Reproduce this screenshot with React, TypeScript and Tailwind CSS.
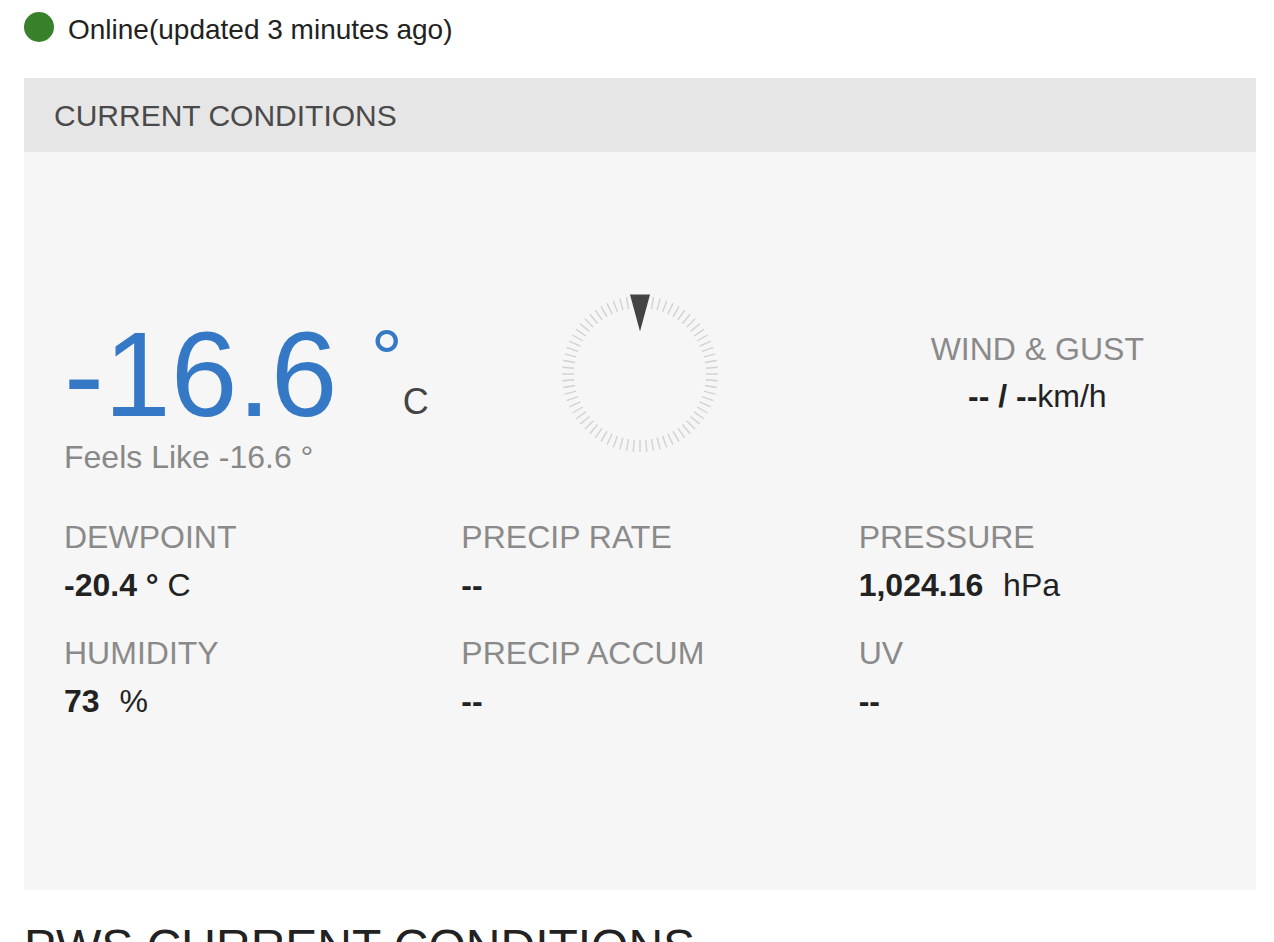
import React from "react";

const ticks = Array.from({ length: 72 }, (_, i) => i * 5);

function Compass() {
  return (
    <svg width="160" height="160" viewBox="0 0 160 160">
      {ticks.map((a) => {
        const r = (a * Math.PI) / 180;
        const x1 = 80 + Math.sin(r) * 66;
        const y1 = 80 - Math.cos(r) * 66;
        const x2 = 80 + Math.sin(r) * 78;
        const y2 = 80 - Math.cos(r) * 78;
        return (
          <line
            key={a}
            x1={x1}
            y1={y1}
            x2={x2}
            y2={y2}
            stroke="#d2d2d2"
            strokeWidth="1.4"
          />
        );
      })}
      <polygon points="70,0.5 90,0.5 80,37.5" fill="#444444" />
    </svg>
  );
}

function Stat({ label, value, unit, gap }: { label: string; value: string; unit?: string; gap?: boolean }) {
  return (
    <div className="pl-[20px]">
      <div className="text-[32px] leading-[38px] text-[#8a8a8a]">{label}</div>
      <div className="mt-[10px] text-[32px] leading-[38px] text-[#222]">
        <span className="font-bold">{value}</span>
        {unit ? <span className={gap ? "ml-[11px]" : ""}> {unit}</span> : null}
      </div>
    </div>
  );
}

export default function App() {
  return (
    <div
      className="h-[942px] overflow-hidden bg-white"
      style={{ fontFamily: '"Liberation Sans", Arial, Helvetica, sans-serif' }}
    >
      <div className="flex items-start pl-[24px] pt-[12px]">
        <div className="h-[30px] w-[30px] rounded-full bg-[#38802a]" />
        <div className="ml-[14px] mt-[3px] text-[28px] leading-[30px] text-[#222]">Online(updated 3 minutes ago)</div>
      </div>

      <div className="ml-[24px] mr-[18px] mt-[33px]">
        <div className="flex h-[74px] items-center bg-[#e6e6e6] pl-[30px] text-[30px] text-[#4a4a4a]">
          CURRENT CONDITIONS
        </div>
        <div className="bg-[#f6f6f6] px-[20px] pb-[170px] pt-[142px]">
          <div className="grid grid-cols-3 items-start">
            <div className="mt-[20px] pl-[20px]">
              <div className="flex items-start">
                <span className="text-[120px] leading-[120px] text-[#3578c5]">-16.6&nbsp;</span>
                <span className="mt-[5px] text-[80px] leading-[80px] text-[#3578c5]">°</span>
                <span className="mt-[70px] text-[36px] leading-[36px] text-[#444]">C</span>
              </div>
              <div className="mt-[4px] text-[32px] leading-[38px] text-[#888]">Feels Like -16.6 °</div>
            </div>
            <div className="flex justify-center">
              <Compass />
            </div>
            <div className="mt-[36px] text-center">
              <div className="text-[32px] leading-[38px] text-[#8a8a8a]">WIND &amp; GUST</div>
              <div className="mt-[9px] text-[32px] leading-[38px] text-[#222]">
                <span className="font-bold">-- / --</span>km/h
              </div>
            </div>
          </div>

          <div className="mt-[42px] grid grid-cols-3">
            <Stat label="DEWPOINT" value="-20.4 °" unit="C" />
            <Stat label="PRECIP RATE" value="--" />
            <Stat label="PRESSURE" value="1,024.16" unit="hPa" gap />
          </div>
          <div className="mt-[30px] grid grid-cols-3">
            <Stat label="HUMIDITY" value="73" unit="%" gap />
            <Stat label="PRECIP ACCUM" value="--" />
            <Stat label="UV" value="--" />
          </div>
        </div>
      </div>

      <div className="ml-[24px] mt-[33px] text-[48px] leading-[48px] text-[#222]">PWS CURRENT CONDITIONS</div>
    </div>
  );
}
